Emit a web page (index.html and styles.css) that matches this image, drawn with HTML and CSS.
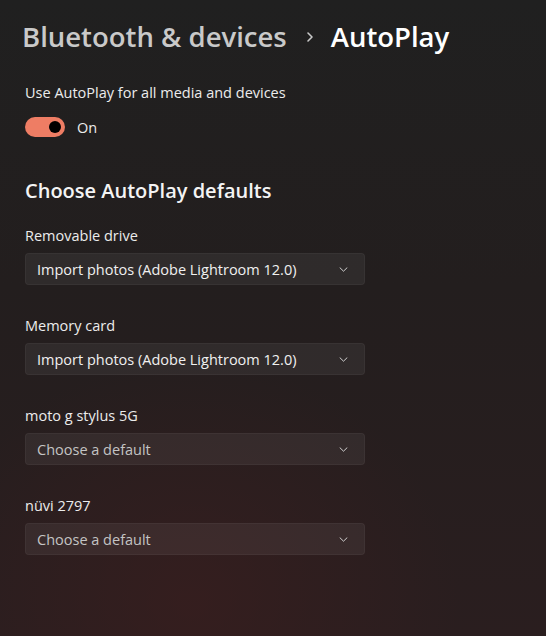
FILE: index.html
```html
<!DOCTYPE html>
<html lang="en">
<head>
    <meta charset="UTF-8">
    <meta name="viewport" content="width=device-width, initial-scale=1.0">
    <title>AutoPlay</title>
    <link rel="stylesheet" href="styles.css">
</head>
<body>
    <div class="page">
        <h1 class="breadcrumb">
            <span class="crumb-parent">Bluetooth &amp; devices</span>
            <svg class="crumb-sep" width="10" height="12" viewBox="0 0 10 12"><path d="M3 2 L7 6 L3 10" fill="none" stroke="#c8c8c8" stroke-width="1.6" stroke-linecap="round" stroke-linejoin="round"/></svg>
            <span class="crumb-current">AutoPlay</span>
        </h1>

        <div class="setting">
            <div class="setting-label">Use AutoPlay for all media and devices</div>
            <div class="toggle-row">
                <div class="toggle on"><span class="knob"></span></div>
                <span class="toggle-text">On</span>
            </div>
        </div>

        <h2 class="section-title">Choose AutoPlay defaults</h2>

        <div class="groups">
            <div class="group">
                <div class="group-label">Removable drive</div>
                <div class="dropdown">
                    <span>Import photos (Adobe Lightroom 12.0)</span>
                    <svg class="chev" width="9" height="5" viewBox="0 0 9 5"><path d="M1 0.8 L4.5 4.2 L8 0.8" fill="none" stroke="#cfcfcf" stroke-width="1" stroke-linecap="round" stroke-linejoin="round"/></svg>
                </div>
            </div>
            <div class="group">
                <div class="group-label">Memory card</div>
                <div class="dropdown">
                    <span>Import photos (Adobe Lightroom 12.0)</span>
                    <svg class="chev" width="9" height="5" viewBox="0 0 9 5"><path d="M1 0.8 L4.5 4.2 L8 0.8" fill="none" stroke="#cfcfcf" stroke-width="1" stroke-linecap="round" stroke-linejoin="round"/></svg>
                </div>
            </div>
            <div class="group">
                <div class="group-label">moto g stylus 5G</div>
                <div class="dropdown placeholder">
                    <span>Choose a default</span>
                    <svg class="chev" width="9" height="5" viewBox="0 0 9 5"><path d="M1 0.8 L4.5 4.2 L8 0.8" fill="none" stroke="#cfcfcf" stroke-width="1" stroke-linecap="round" stroke-linejoin="round"/></svg>
                </div>
            </div>
            <div class="group">
                <div class="group-label">nüvi 2797</div>
                <div class="dropdown placeholder">
                    <span>Choose a default</span>
                    <svg class="chev" width="9" height="5" viewBox="0 0 9 5"><path d="M1 0.8 L4.5 4.2 L8 0.8" fill="none" stroke="#cfcfcf" stroke-width="1" stroke-linecap="round" stroke-linejoin="round"/></svg>
                </div>
            </div>
        </div>
    </div>
</body>
</html>
```

FILE: styles.css
```css
html, body {
    height: 100%;
}

body {
    margin: 0;
    font-family: "Open Sans", "Noto Sans", sans-serif;
    color: #ececec;
    background-color: #221f1f;
    background-image:
        radial-gradient(ellipse 70% 55% at 35% 95%, rgba(62, 30, 30, 0.55), rgba(0, 0, 0, 0) 70%),
        linear-gradient(180deg, #202020 0%, #231e1e 45%, #2a1e1f 100%);
    overflow: hidden;
}

.page {
    padding: 16px 0 0 25px;
}

.breadcrumb {
    margin: 0 0 0 -3px;
    display: flex;
    align-items: center;
    font-size: 27.5px;
    font-weight: 600;
    height: 40px;
}

.crumb-parent {
    color: #c9c9c9;
}

.crumb-sep {
    margin: 2px 16px 0 18px;
}

.crumb-current {
    color: #ffffff;
}

.setting {
    margin-top: 27px;
}

.setting-label {
    font-size: 14.5px;
    line-height: 20px;
}

.toggle-row {
    display: flex;
    align-items: center;
    gap: 12px;
    margin-top: 14px;
}

.toggle {
    width: 40px;
    height: 20px;
    border-radius: 10px;
    background-color: #ee7d64;
    position: relative;
}

.toggle .knob {
    position: absolute;
    right: 4px;
    top: 4px;
    width: 12px;
    height: 12px;
    border-radius: 50%;
    background-color: #000;
}

.toggle-text {
    font-size: 14.5px;
}

.section-title {
    margin: 40px 0 0;
    font-size: 20px;
    font-weight: 600;
    line-height: 28px;
    color: #f4f4f4;
}

.groups {
    margin-top: 21px;
}

.group {
    margin-bottom: 31px;
}

.group-label {
    font-size: 14.5px;
    line-height: 20px;
}

.dropdown {
    margin-top: 7px;
    width: 340px;
    height: 32px;
    box-sizing: border-box;
    padding: 0 16px 0 11px;
    display: flex;
    align-items: center;
    justify-content: space-between;
    background-color: rgba(255, 255, 255, 0.06);
    border: 1px solid rgba(255, 255, 255, 0.04);
    border-radius: 4px;
    font-size: 14.5px;
    color: #f0f0f0;
}

.dropdown.placeholder {
    color: #c4c4c4;
}
```
